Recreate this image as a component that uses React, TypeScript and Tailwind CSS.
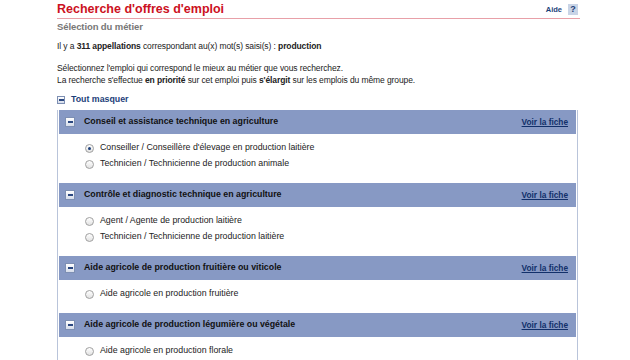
import React from "react";

// ─── Data ─────────────────────────────────────────────────────────────────────

type Group = { title: string; items: string[]; checked?: number };

const groups: Group[] = [
  {
    title: "Conseil et assistance technique en agriculture",
    items: [
      "Conseiller / Conseillère d'élevage en production laitière",
      "Technicien / Technicienne de production animale",
    ],
    checked: 0,
  },
  {
    title: "Contrôle et diagnostic technique en agriculture",
    items: [
      "Agent / Agente de production laitière",
      "Technicien / Technicienne de production laitière",
    ],
  },
  {
    title: "Aide agricole de production fruitière ou viticole",
    items: ["Aide agricole en production fruitière"],
  },
  {
    title: "Aide agricole de production légumière ou végétale",
    items: ["Aide agricole en production florale"],
  },
];

// ─── Bits ─────────────────────────────────────────────────────────────────────

function MinusBox({ small }: { small?: boolean }) {
  return (
    <span
      className={`inline-flex items-center justify-center shrink-0 border border-[#7d8fb3] bg-gradient-to-b from-[#ffffff] to-[#d5dcea] ${
        small ? "w-[8px] h-[8px]" : "w-[10px] h-[10px]"
      }`}
    >
      <span className="block w-[5px] h-[2px] bg-[#2a4780]" />
    </span>
  );
}

function Radio({ checked }: { checked?: boolean }) {
  return (
    <span className="inline-flex items-center justify-center w-[9px] h-[9px] rounded-full border border-[#a0a0a0] bg-gradient-to-b from-[#ffffff] to-[#e2e2e2] shrink-0">
      {checked && <span className="block w-[3px] h-[3px] rounded-full bg-[#1d3f7a]" />}
    </span>
  );
}

// ─── Page ─────────────────────────────────────────────────────────────────────

export default function App() {
  return (
    <div
      className="w-[630px] h-[360px] overflow-hidden bg-white text-[8.5px] text-[#222]"
      style={{ fontFamily: "'Liberation Sans', Arial, sans-serif" }}
    >
      <div className="ml-[57px] w-[523px]">
        {/* Title */}
        <div className="flex items-end justify-between pt-[1px] pb-[1px] border-b border-[#e8a0a8]">
          <h1 className="text-[12.5px] leading-[16px] font-bold text-[#cc1122]">
            Recherche d'offres d'emploi
          </h1>
          <div className="flex items-center gap-[6px] mb-[2px] mr-[2px]">
            <span className="text-[7.5px] font-bold text-[#1d3f7a]">Aide</span>
            <span className="w-[10px] h-[11px] bg-[#c9d4e6] text-[#1d3f7a] font-bold text-[9px] leading-[11px] text-center">
              ?
            </span>
          </div>
        </div>

        <h2 className="mt-[2px] text-[9.5px] leading-[12px] tracking-[-0.1px] font-bold text-[#777]">
          Sélection du métier
        </h2>

        <p className="mt-[7px] leading-[12px] tracking-[-0.1px]">
          Il y a <b>311 appellations</b> correspondant au(x) mot(s) saisi(s) : <b>production</b>
        </p>

        <p className="mt-[10px] leading-[12px] tracking-[-0.1px]">
          Sélectionnez l'emploi qui correspond le mieux au métier que vous recherchez.
          <br />
          La recherche s'effectue <b>en priorité</b> sur cet emploi puis <b>s'élargit</b> sur les
          emplois du même groupe.
        </p>

        {/* Toggle all */}
        <div className="mt-[9px] h-[10px] flex items-center gap-[6px] text-[8.8px] text-[#1d3f7a] font-bold">
          <MinusBox small />
          <span>Tout masquer</span>
        </div>

        {/* Groups */}
        <div className="mt-[5px] border-l border-r border-[#b9c4da] px-[1px] w-[521px]">
          {groups.map((g) => (
            <div key={g.title}>
              <div className="h-[24px] bg-[#8799c4] flex items-center pl-[6px] pr-[8px] text-[8.8px]">
                <MinusBox />
                <span className="ml-[9px] font-bold text-[#111] flex-1">{g.title}</span>
                <a href="#" className="font-bold text-[8.3px] text-[#12306a] underline">
                  Voir la fiche
                </a>
              </div>
              <div className="pt-[6px] pb-[11px] pl-[26px] flex flex-col text-[8.8px]">
                {g.items.map((it, i) => (
                  <label key={it} className="flex items-center gap-[6px] h-[16px]">
                    <Radio checked={g.checked === i} />
                    <span>{it}</span>
                  </label>
                ))}
              </div>
            </div>
          ))}
        </div>
      </div>
    </div>
  );
}
